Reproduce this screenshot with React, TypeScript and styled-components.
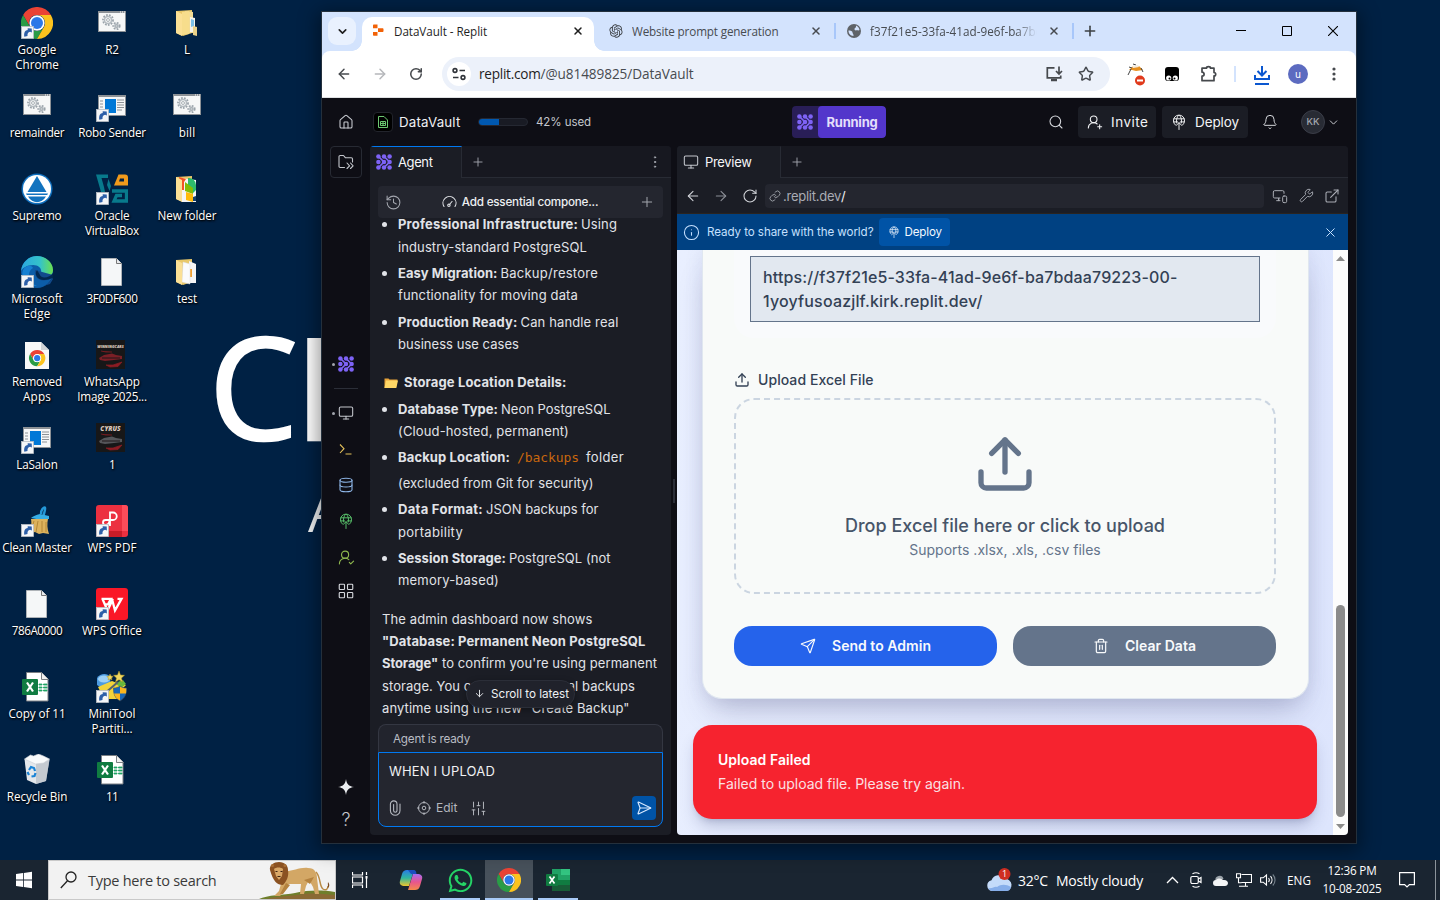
import React, { useLayoutEffect, useRef } from "react";
import styled, { createGlobalStyle, css } from "styled-components";
import {
  ArrowDown, ArrowLeft, ArrowRight, Bell, ChevronDown, Database, ExternalLink, House, Info,
  Link, Monitor, MonitorSmartphone, Plus, RotateCw, Search, Send, SendHorizontal,
  SlidersVertical, Star, Trash2, Upload, UserRoundCheck, UserRoundPlus, Wrench, X, History,
  EllipsisVertical, LayoutGrid,
} from "lucide-react";
import { FaWhatsapp } from "react-icons/fa";
import { RiOpenaiFill } from "react-icons/ri";

const ui = `"Open Sans", "Noto Sans", sans-serif`;
const plex = `Inter, Roboto, "Noto Sans", sans-serif`;
const inter = `Inter, "Liberation Sans", sans-serif`;

const Global = createGlobalStyle`
  * { box-sizing: border-box; }
  body { margin: 0; overflow: hidden; background: #002040; }
  svg { display: block; flex: none; }
`;

/* Text whose tracking is adjusted so that it fills a given measure. */
const Line = styled.span`
  display: inline-block;
  white-space: pre;
`;
function Fit({ w, children }: { w: number; children: string }) {
  const ref = useRef<HTMLSpanElement>(null);
  useLayoutEffect(() => {
    const el = ref.current!;
    el.style.letterSpacing = "0px";
    const natural = el.getBoundingClientRect().width;
    el.style.letterSpacing = `${(w - natural) / children.length}px`;
  }, [w, children]);
  return <Line ref={ref}>{children}</Line>;
}

/* ---------- desktop ---------- */
const Desktop = styled.div`
  width: 1440px;
  height: 900px;
  display: flex;
  flex-direction: column;
  overflow: hidden;
  background: #002144;
  font-family: ${ui};
`;
const Wallpaper = styled.div`
  position: relative;
  height: 860px;
  background: #002144;
`;
const BigLetters = styled.div`
  position: absolute;
  left: 209px;
  top: 288px;
  font: 400 141px/195px ${ui};
  letter-spacing: -3px;
  color: #fff;
  -webkit-text-stroke: 2.5px #fff;
`;
const SmallLetter = styled.div`
  position: absolute;
  left: 308px;
  top: 474px;
  font: 400 54px/74px ${ui};
  color: #f2f4f6;
`;
const Shortcuts = styled.div`
  position: relative;
  display: grid;
  grid-auto-flow: column;
  grid-template-rows: repeat(10, 83px);
  grid-auto-columns: 75px;
  width: 225px;
  margin-left: -1px;
  padding-top: 7px;
`;
const Shortcut = styled.div`
  display: flex;
  flex-direction: column;
  align-items: center;
`;
const ShortcutLabel = styled.div`
  margin: 3px 0 0 1px;
  display: flex;
  flex-direction: column;
  align-items: center;
  font: 400 11.7px/15px ${ui};
  color: #fff;
  text-shadow: 1px 1px 2px #000, 0 1px 2px rgba(0, 0, 0, 0.8);
`;

const ArrowBadge = () => (
  <g>
    <rect x=".5" y="19.500" width="12" height="12" fill="#f4f6f8" stroke="#b9bec4" strokeWidth=".8" />
    <path d="M3.300 29.800c-.6-4.300 1-6.600 3.400-6.800V21.200l4 .2.200 4.200-1.800-.9c-2.200.6-2.800 2-2.600 4.300z" fill="#2d5fa8" />
  </g>
);
const ChromeShapes = () => (
  <>
    <path d="M24 12H44.800A24 24 0 0 0 3.200 12L13.600 30A12 12 0 0 1 24 12Z" fill="#ea4335" />
    <path d="M13.600 30L3.200 12A24 24 0 0 0 24 48L34.400 30A12 12 0 0 1 13.600 30Z" fill="#2a9c46" />
    <path d="M34.400 30L24 48A24 24 0 0 0 44.800 12H24A12 12 0 0 1 34.400 30Z" fill="#fcc31e" />
    <circle cx="24" cy="24" r="11.500" fill="#fff" />
    <circle cx="24" cy="24" r="9" fill="#2b78e8" />
  </>
);
const Svg = ({ children, s = 32, vb = "0 0 32 32" }: { children: React.ReactNode; s?: number; vb?: string }) => (
  <svg width={s} height={s} viewBox={vb}>{children}</svg>
);
const ChromeIcon = () => <Svg><g transform="scale(.6667)"><ChromeShapes /></g><ArrowBadge /></Svg>;
const Cog = ({ x, y, r }: { x: number; y: number; r: number }) => (
  <g fill="none" stroke="#9aa3aa">
    <circle cx={x} cy={y} r={r} strokeWidth="1.800" strokeDasharray="1.700 1.300" />
    <circle cx={x} cy={y} r={r - 1.500} strokeWidth="1.500" stroke="#b4bbc0" />
    <circle cx={x} cy={y} r={r * 0.3} strokeWidth=".8" />
  </g>
);
const BatchIcon = () => (
  <Svg>
    <rect x="2.500" y="4.500" width="27" height="20" fill="#f6f7f7" stroke="#8c9196" />
    <path d="M2 4h28v2H2z" fill="#8c9196" />
    <path d="M24 5h1m1 0h1m1 0h1" stroke="#fff" />
    <Cog x={12} y={13} r={5} /><Cog x={20.500} y={19} r={3.200} />
  </Svg>
);
const FormIcon = () => (
  <Svg>
    <rect x="2.500" y="5.500" width="27" height="20" fill="#f6f7f7" stroke="#8c9196" />
    <path d="M2 5h28v2H2z" fill="#8c9196" />
    <path d="M4 11h3m-3 3h3m-3 3h3m14-7h7m-7 2.500h7m-7 2.500h7m-7 2.500h7m-7 2.500h5" stroke="#8c9196" />
    <rect x="9" y="9" width="11" height="14" fill="#0078d7" />
    <ArrowBadge />
  </Svg>
);
const FolderIcon = ({ kind }: { kind: "docs" | "apps" | "pages" }) => (
  <Svg>
    <path d="M5 4l16-1v23l-9 3-7-3z" fill="#e9c869" />
    {kind === "docs" && <><path d="M14 4l8 1v21h-8z" fill="#f3dc95" /><path d="M19 10l5 1v14h-5z" fill="#f6f4ea" /><path d="M20 12l3 1v6l-3 1z" fill="#7cc1e8" /><path d="M11 5l7-1v23l-7 1z" fill="#f7dd8c" /><path d="M22 19l4 1v9l-4-1z" fill="#ead28a" /></>}
    {kind === "apps" && <><path d="M9 5l16 2v22H11z" fill="#f4f5f6" /><path d="M17 5a7 7 0 0 1 8 7v5l-3 3-5-2z" fill="#2dbb6c" /><path d="M8 4l7 2-2 3v8h-3z" fill="#f35325" /><path d="M14 9l8 6v6l-8-3z" fill="#81bc06" /><path d="M15 19l7 2v8l-7-2z" fill="#ffba08" /><path d="M22 24l3-1v5h-3z" fill="#16416f" /></>}
    {kind === "pages" && <><path d="M18 5l7 3v19l-7 0z" fill="#f4f5f6" /><path d="M18 13h3v8h-3z" fill="#f0a030" /><path d="M12 6l7 2v20l-8-2z" fill="#fbfbfb" stroke="#ddd" strokeWidth=".5" /></>}
    <path d="M5 4l6 3v22l-6-3z" fill="#fbe095" />
  </Svg>
);
const SupremoIcon = () => (
  <Svg><circle cx="16" cy="16" r="15.500" fill="#0f6fbd" /><circle cx="16" cy="16" r="14" fill="#fff" />
    <path d="M16 3l9.500 16h-19zM5 20.500h22l-.8 1.500H5.800zM7 23.500h18c-4.500 7.500-13.500 7.500-18 0z" fill="#1273bf" /></Svg>
);
const VBoxIcon = () => (
  <Svg>
    <path d="M0 1.500h12v3.500H5.500L8 14l1 5H5z" fill="#087a8c" />
    <path d="M12.500 6l2.500 7-1.500 5-2.500-6z" fill="#087a8c" />
    <path d="M18 12.500L22.500 1.500H29a3 3 0 0 1 3 3v8z" fill="#f09a1c" /><path d="M24 5.500h4v3h-5z" fill="#002144" />
    <path d="M16 18h14.500v10H18l2.500-5.500H26" fill="none" stroke="#087a8c" strokeWidth="3.300" />
    <ArrowBadge />
  </Svg>
);
const EdgeIcon = () => (
  <Svg>
    <defs>
      <linearGradient id="eg" x1="0" x2="1"><stop offset="0" stopColor="#2aa7e0" /><stop offset=".6" stopColor="#35c3c9" /><stop offset="1" stopColor="#6be04e" /></linearGradient>
    </defs>
    <circle cx="16" cy="16" r="16" fill="#0c5da8" />
    <path d="M0 15C1 6 8 0 16 0s16 6 16 14c0 5-4 7.500-8 7.500-3.500 0-5-1.500-5-2.500s1.200-1.500 1.200-4c0-3-3-6-8-6C6 9 1.500 12 0 15z" fill="url(#eg)" />
    <path d="M12 12c-6 3-6 14 4 18-10 1-17-8-14-16 2-4 8-6 10-2z" fill="#1780d1" />
    <path d="M14 14c-1 6 3 12 12 10l5-2c-2 4-6 8-12 9l10-3 3-5v-4z" fill="#124a8c" />
    <path d="M16 14c-3 4 0 10 7 10 4 0 6-1 8-2l1 1V17c-3 5-12 6-13 2z" fill="#002144" opacity=".85" />
    <ArrowBadge />
  </Svg>
);
const PaperIcon = () => (
  <Svg><path d="M5.500 2.500h15l5 5v22h-20z" fill="#f5f7f8" stroke="#aeb3b8" /><path d="M20.500 2.500v5h5" fill="#e8eaec" stroke="#777" /></Svg>
);
const ChromeDocIcon = () => (
  <Svg><path d="M4 3h16l8 8v19H4z" fill="#f7f8f8" /><path d="M20 3v8h8z" fill="#cfd3d7" /><g transform="translate(8 11) scale(.34)"><ChromeShapes /></g></Svg>
);
const PosterIcon = ({ title, car }: { title: string; car: string }) => (
  <Svg>
    <path d="M0 1h29v29H0z" fill="#171718" />
    <text x="14.500" y="8.500" textAnchor="middle" fontSize={title.length > 6 ? 3.700 : 6.500} fontWeight="800" fontStyle="italic" fill="#dac9bd" fontFamily="Open Sans, sans-serif">{title}</text>
    <path d="M3 19l5-3 8-1.500 4 1.500 6 1v3l-8 1-9 1-5-1z" fill={car} />
    <path d="M10 26l7 0 9-3-4 4.500-8 .5zM5 12l5 1h6" stroke="#8c1c24" fill="#8c1c24" strokeWidth=".7" />
    <path d="M6 19h18" stroke="#201618" />
  </Svg>
);
const BroomIcon = () => (
  <Svg>
    <path d="M20 9c0-5 3-7 4-6.500S23 8 22.500 11" fill="none" stroke="#2498d8" strokeWidth="2.400" />
    <path d="M10 13c2-2 5-3 9-4l9 2v3l-10 .5z" fill="#36aee6" />
    <path d="M10 14l17 0c-1 4-1 10 1 15l-6-1-4 1-4-2-8 2c4-4 5-10 4-15z" fill="#dcb25c" />
    <path d="M13 16l-3 10m7-10l-2 11m6-11v11m4-10v10" stroke="#a87e30" strokeWidth=".8" />
    <ArrowBadge />
  </Svg>
);
const WpsPdfIcon = () => (
  <Svg><rect width="32" height="32" rx="3" fill="#ec3040" /><path d="M26 0h3a3 3 0 0 1 3 3v23h-6z" fill="#fd4c5a" /><path d="M0 26h26v6H3a3 3 0 0 1-3-3z" fill="#c81c28" />
    <path d="M14 21V7.500h3a3.500 3.500 0 0 1 0 7.500H9.500a2.500 2.500 0 0 0 0 5c2 0 4-1.500 4-5" fill="none" stroke="#fff" strokeWidth="1.800" /><ArrowBadge /></Svg>
);
const WpsIcon = () => (
  <Svg><rect width="32" height="32" rx="3" fill="#fa1727" />
    <path d="M5.500 10.800h9.500l-3 5.500h-3.200M6.500 11l5 11.500L17 11m-1 0l3 11.500L25.500 10.800h-4" fill="none" stroke="#fff" strokeWidth="2.300" /><ArrowBadge /></Svg>
);
const ExcelDoc = () => (
  <Svg>
    <path d="M5.500 1.500h15l6.500 6.500v22H5.500z" fill="#fff" stroke="#7b7f83" /><path d="M20.500 1.500v7h7" fill="#f1f1f1" stroke="#7b7f83" />
    <path d="M18 14h3v-1h-3zm4.500 0H26v-1h-3.500zM18 17h3v-1h-3zm4.500 0H26v-1h-3.500zM18 20h3v-1h-3zm4.500 0H26v-1h-3.500z" fill="#21a366" stroke="#21a366" strokeWidth=".8" />
    <rect x="1" y="8" width="16" height="16" rx="1" fill="#107c41" />
    <path d="M6 11.500l6 9m0-9l-6 9" stroke="#fff" strokeWidth="2.200" />
  </Svg>
);
const MiniToolIcon = () => (
  <Svg>
    <path d="M1 14V7c3-5 11-5 13-1l1 10H4z" fill="#4d9be0" /><ellipse cx="8" cy="8" rx="6" ry="3.500" fill="#9cd0f6" />
    <path d="M2 16l14-6 8 3 6 1-5 5-3 9H12l-8-8z" fill="#f2d33a" /><path d="M19 12l8-3 3 4-5 4z" fill="#68b83c" />
    <path d="M8 23l14-12" stroke="#53606d" strokeWidth="2" /><path d="M23 0l1.500 4 4 .3-3 2.700 1 4-3.500-2.300L19.500 11l1-4-3-2.700 4-.3zM14 3l1 2 2.200.4-1.600 1.500.3 2.100-1.900-1-1.800 1 .2-2-1.500-1.600 2.200-.4z" fill="#f0d860" stroke="#a98f20" strokeWidth=".5" />
    <path d="M24 15c2 1.500 4 2 6.500 2 .2 6-1.500 10-6.500 13-5-3-6.700-7-6.500-13 2.500 0 4.500-.5 6.500-2z" fill="#1767b8" stroke="#484f58" strokeWidth=".6" />
    <path d="M24 15.500v7h6c.3-2 .3-3.500.2-5-2.500 0-4.400-.8-6.200-2zM24 22.500h-6c1 3.500 3 5.500 6 7z" fill="#fbb51c" /><ArrowBadge />
  </Svg>
);
const BinIcon = () => (
  <Svg>
    <path d="M3.500 5l25 0-3.500 22-10 3-9-4z" fill="#e4e8ec" /><path d="M15 9l13.500-3L25 27l-10 3z" fill="#b9c0c8" opacity=".75" />
    <path d="M3.500 5l6-4 3 1 5-2 5 2 6 3-6 4-8 1z" fill="#f8fafb" stroke="#c9cfd5" strokeWidth=".6" />
    <path d="M8 16l2-3 3 1 1 3m.5 2l-1 3-3 .5M8 21l-1.500-3" fill="none" stroke="#1983d6" strokeWidth="2.200" />
  </Svg>
);

type Item = [React.ReactNode, [string, number][]];
const shortcuts: Item[] = [
  [<ChromeIcon />, [["Google", 39], ["Chrome", 43.500]]],
  [<BatchIcon />, [["remainder", 54.500]]],
  [<SupremoIcon />, [["Supremo", 49]]],
  [<EdgeIcon />, [["Microsoft", 51.500], ["Edge", 27]]],
  [<ChromeDocIcon />, [["Removed", 50], ["Apps", 28]]],
  [<FormIcon />, [["LaSalon", 41.500]]],
  [<BroomIcon />, [["Clean Master", 69.500]]],
  [<PaperIcon />, [["786A0000", 50.500]]],
  [<ExcelDoc />, [["Copy of 11", 57]]],
  [<BinIcon />, [["Recycle Bin", 60.500]]],
  [<BatchIcon />, [["R2", 13.500]]],
  [<FormIcon />, [["Robo Sender", 67.500]]],
  [<VBoxIcon />, [["Oracle", 35], ["VirtualBox", 54]]],
  [<PaperIcon />, [["3F0DF600", 51]]],
  [<PosterIcon title="WINNINGCARS" car="#7a1f26" />, [["WhatsApp", 56], ["Image 2025...", 69.500]]],
  [<PosterIcon title="CYRUS" car="#55565a" />, [["1", 6]]],
  [<WpsPdfIcon />, [["WPS PDF", 49]]],
  [<WpsIcon />, [["WPS Office", 60]]],
  [<MiniToolIcon />, [["MiniTool", 47], ["Partiti...", 41]]],
  [<ExcelDoc />, [["11", 12]]],
  [<FolderIcon kind="docs" />, [["L", 6]]],
  [<BatchIcon />, [["bill", 16.500]]],
  [<FolderIcon kind="apps" />, [["New folder", 59]]],
  [<FolderIcon kind="pages" />, [["test", 20]]],
];

/* ---------- browser window ---------- */
const BrowserWindow = styled.div`
  position: absolute;
  left: 322px;
  top: 12px;
  width: 1034px;
  height: 831px;
  display: flex;
  flex-direction: column;
  background: #0e0e15;
  box-shadow: 0 0 0 1px #24303c, 0 4px 18px 4px rgba(0, 0, 0, 0.42);
`;
const TabStrip = styled.div`
  height: 39px;
  display: flex;
  align-items: flex-start;
  padding: 5px 0 0 6px;
  background: #d3e3fd;
  color: #3c4043;
`;
const TabSearch = styled.div`
  width: 28px;
  height: 28px;
  margin-right: 6px;
  display: grid;
  place-items: center;
  border-radius: 9px;
  background: #e9f1fe;
  color: #1f1f1f;
`;
const BrowserTab = styled.div<{ $width: number; $active?: boolean; $lead: number }>`
  width: ${(p) => p.$width}px;
  height: ${(p) => (p.$active ? 34 : 28)}px;
  display: flex;
  align-items: center;
  gap: 8px;
  padding: 0 ${(p) => (p.$active ? 10 : 12)}px ${(p) => (p.$active ? 6 : 0)}px ${(p) => p.$lead}px;
  font: 400 11.7px/16px ${ui};
  color: #474b50;
  ${(p) => p.$active && css`
    position: relative;
    background: #fff;
    color: #1f1f1f;
    border-radius: 10px 10px 0 0;
    &::before, &::after {
      content: "";
      position: absolute;
      bottom: 0;
      width: 10px;
      height: 10px;
    }
    &::before { left: -10px; background: radial-gradient(circle at 0 0, transparent 9.5px, #fff 10px); }
    &::after { right: -10px; background: radial-gradient(circle at 100% 0, transparent 9.5px, #fff 10px); }
  `}
`;
const TabTitle = styled.div<{ $fade?: boolean }>`
  flex: 1;
  min-width: 0;
  overflow: hidden;
  ${(p) => p.$fade && css`mask-image: linear-gradient(90deg, #000 145px, transparent 167px);`}
`;
const TabRule = styled.div`
  width: 2px;
  height: 16px;
  margin-top: 6px;
  background: #a8c7fa;
`;
const NewTab = styled.div`
  margin: 6px 0 0 8px;
`;
const WindowControls = styled.div`
  display: flex;
  margin: -5px 0 0 auto;
`;
const WindowControl = styled.div`
  width: 46px;
  height: 38px;
  display: grid;
  place-items: center;
  color: #000;
`;
const AddressRow = styled.div`
  height: 47px;
  display: flex;
  align-items: center;
  padding-left: 4px;
  background: #fff;
  border-radius: 8px 8px 0 0;
  border-bottom: 1px solid #dfe1e3;
  color: #46494d;
`;
const AddressBack = styled.div`
  background: linear-gradient(#d3e3fd 50%, #fff 50%);
`;
const Slot = styled.div<{ $w?: number; $color?: string }>`
  width: ${(p) => p.$w ?? 36}px;
  display: grid;
  place-items: center;
  flex: none;
  color: ${(p) => p.$color ?? "inherit"};
`;
const Omnibox = styled.div`
  width: 668px;
  height: 34px;
  margin: 0 8px;
  padding: 0 8px 0 5px;
  display: flex;
  align-items: center;
  border-radius: 17px;
  background: #ecf1fa;
  font: 400 13.6px/20px ${ui};
  color: #474b50;
  b { font-weight: 400; color: #1f1f1f; }
`;
const SiteChip = styled.div`
  width: 24px;
  height: 24px;
  margin-right: 8px;
  display: grid;
  place-items: center;
  border-radius: 50%;
  background: #fff;
  color: #30343a;
`;
const OmniActions = styled.div`
  display: flex;
  margin-left: auto;
`;
const ToolbarRule = styled.div`
  width: 2px;
  height: 16px;
  margin: 0 8px;
  background: #d3e3fd;
`;
const ProfileDot = styled.div`
  width: 20px;
  height: 20px;
  border-radius: 50%;
  display: grid;
  place-items: center;
  background: #5c6bc0;
  color: #fff;
  font: 400 10px/20px ${inter};
`;

/* ---------- workspace ---------- */
const Workspace = styled.div`
  flex: 1;
  min-height: 0;
  display: flex;
  flex-direction: column;
  font-family: ${plex};
  color: #f0f1f3;
`;
const Header = styled.div`
  height: 48px;
  display: flex;
  align-items: center;
`;
const HeaderLeft = styled.div`
  width: 470px;
  display: flex;
  align-items: center;
  padding-left: 8px;
`;
const ProjectIcon = styled.div`
  width: 20px;
  height: 20px;
  margin: 0 6px 0 11px;
  display: grid;
  place-items: center;
  border-radius: 4px;
  background: #000;
  border: 1px solid #22242c;
`;
const ProjectName = styled.div`
  width: 79px;
  font-size: 13.300px;
`;
const Meter = styled.div`
  width: 50px;
  height: 8px;
  margin-right: 8px;
  overflow: hidden;
  border-radius: 4px;
  background: #191b24;
  border: 1px solid #252832;
  &::before {
    content: "";
    display: block;
    width: 42%;
    height: 100%;
    background: #0058b0;
  }
`;
const Usage = styled.div`
  font-size: 11.500px;
  color: #c4c7cd;
`;
const RunPill = styled.div`
  width: 94px;
  height: 32px;
  display: flex;
  align-items: center;
  overflow: hidden;
  border-radius: 4px;
  background: #291e57;
`;
const RunLabel = styled.div`
  width: 68px;
  height: 32px;
  display: grid;
  place-items: center;
  border-radius: 4px;
  background: #5336cb;
  font: 700 13px/32px ${plex};
  color: #e4dffb;
`;
const HeaderRight = styled.div`
  display: flex;
  align-items: center;
  gap: 6px;
  margin-left: auto;
  padding-right: 18px;
  color: #d6d8dd;
`;
const HeaderButton = styled.div<{ $w: number }>`
  width: ${(p) => p.$w}px;
  height: 32px;
  display: flex;
  align-items: center;
  gap: 8px;
  padding-left: 9px;
  border-radius: 4px;
  background: #1b1d25;
  font-size: 13.500px;
  color: #f3f4f6;
`;
const UserDot = styled.div`
  width: 24px;
  height: 24px;
  margin-left: 9px;
  display: grid;
  place-items: center;
  border-radius: 50%;
  border: 1px solid #3a3d48;
  background: #282b34;
  font: 500 9.500px/22px ${plex};
  color: #a5a8b0;
`;
const UserChevron = styled.div`
  margin-right: -2px;
  margin-left: -4px;
`;
const Body = styled.div`
  flex: 1;
  min-height: 0;
  display: flex;
  padding: 0 8px 8px 0;
`;
const Rail = styled.div`
  width: 48px;
  display: flex;
  flex-direction: column;
  align-items: center;
`;
const RailButton = styled.div<{ $color?: string; $mt?: string; $dot?: boolean; $boxed?: boolean }>`
  width: 32px;
  height: 32px;
  flex: none;
  margin-top: ${(p) => p.$mt ?? "4px"};
  display: grid;
  place-items: center;
  color: ${(p) => p.$color ?? "#c3c6cc"};
  ${(p) => p.$boxed && css`border: 1px solid #272a33; border-radius: 4px;`}
  ${(p) => p.$dot && css`
    position: relative;
    &::before {
      content: "";
      position: absolute;
      left: 2px;
      top: 15px;
      width: 3px;
      height: 3px;
      border-radius: 50%;
      background: #a2a5ad;
    }
  `}
`;
const RailRule = styled.div`
  width: 24px;
  height: 1px;
  margin: 8px 0 4px;
  background: #2b2e38;
`;
const HelpMark = styled.span`
  font: 300 18px/34px ${plex};
`;
const Pane = styled.div<{ $w: number }>`
  width: ${(p) => p.$w}px;
  position: relative;
  display: flex;
  flex-direction: column;
  overflow: hidden;
  border-radius: 4px;
  background: #1b1d25;
`;
const PaneTabs = styled.div`
  height: 32px;
  flex: none;
  display: flex;
  background: #171820;
`;
const PaneTab = styled.div<{ $w: number; $focus?: boolean }>`
  width: ${(p) => p.$w}px;
  display: flex;
  align-items: center;
  gap: 6px;
  padding-left: 6px;
  padding-bottom: 1px;
  background: #1b1d25;
  border-right: 1px solid #282b34;
  border-top: 1px solid ${(p) => (p.$focus ? "#0079f2" : "#1b1d25")};
  font: 400 13px/16px ${plex};
  color: #f5f6f8;
  > span { margin-top: -1px; }
`;
const PaneTabRest = styled.div`
  flex: 1;
  display: flex;
  align-items: center;
  padding: 0 8px 0 9px;
  border-bottom: 1px solid #282b34;
  color: #a9acb4;
  > :nth-child(2) { margin-left: auto; }
`;
const Splitter = styled.div`
  width: 6px;
  display: grid;
  place-items: center;
  &::before {
    content: "";
    width: 2px;
    height: 24px;
    background: #2b2e38;
  }
`;

/* agent chat */
const Chat = styled.div`
  flex: 1;
  min-height: 0;
  padding: 8px 8px 0;
`;
const ChatHead = styled.div`
  position: relative;
  z-index: 1;
  height: 32px;
  display: flex;
  align-items: center;
  padding: 0 8px 0 7px;
  border-radius: 4px;
  background: #24262f;
  color: #a3a6ae;
`;
const ChatTitle = styled.div`
  flex: 1;
  display: flex;
  justify-content: center;
  align-items: center;
  gap: 5px;
  margin-left: -1px;
  font-size: 11.700px;
  font-weight: 500;
  color: #eceef1;
`;
const Prose = styled.div`
  margin-top: -4.900px;
  padding-left: 4px;
  font: 400 13px/22.400px ${plex};
  color: #e1e3e8;
  b { font-weight: 650; }
`;
const Bullets = styled.ul`
  margin: 0 0 16px;
  padding: 0 0 0 16px;
  list-style: none;
  display: flex;
  flex-direction: column;
  gap: 4px;
`;
const Bullet = styled.li`
  position: relative;
  &::before {
    content: "";
    position: absolute;
    left: -16px;
    top: 9px;
    width: 5px;
    height: 5px;
    border-radius: 50%;
    background: #e1e3e8;
  }
`;
const Row = styled.div<{ $pull?: number }>`
  height: 22.400px;
  display: flex;
  gap: ${(p) => p.$pull ?? 3}px;
  white-space: nowrap;
`;
const CodeRow = styled(Row)`
  height: 25.300px;
`;
const Code = styled.code`
  margin: 0 3px;
  font: 400 13px/24px "DejaVu Sans Mono", monospace;
  color: #c8670e;
`;
const Heading = styled.div`
  height: 22.400px;
  margin-bottom: 3.800px;
  display: flex;
  align-items: center;
  gap: 6px;
  padding-left: 2px;
`;
const JumpPill = styled.div`
  position: absolute;
  left: 96px;
  top: 534px;
  width: 109px;
  height: 28px;
  display: flex;
  align-items: center;
  gap: 6px;
  padding: 0 0 1px 7px;
  border-radius: 14px;
  border: 1px solid #2b2e38;
  background: #20222b;
  box-shadow: 0 2px 6px rgba(0, 0, 0, 0.35);
  font-size: 11.700px;
  color: #eef0f3;
`;
const Composer = styled.div`
  position: relative;
  margin: 0 8px 8px;
`;
const Status = styled.div`
  height: 28px;
  padding: 0 14px;
  border: 1px solid #343742;
  border-bottom: 0;
  border-radius: 8px 8px 0 0;
  background: #22242d;
  font: 400 11.700px/28px ${plex};
  color: #b9bcc3;
`;
const Prompt = styled.div`
  height: 75px;
  display: flex;
  flex-direction: column;
  justify-content: space-between;
  padding: 9px 6px 6px 10px;
  border: 1px solid #0079f2;
  border-radius: 0 0 8px 8px;
  background: #24262f;
  font: 400 13px/18px ${plex};
  > span { align-self: flex-start; }
`;
const PromptTools = styled.div`
  display: flex;
  align-items: center;
  font-size: 12px;
  color: #b4b7be;
`;
const Edit = styled.div`
  display: flex;
  align-items: center;
  gap: 5px;
  margin: 0 12px 0 16px;
`;
const SendButton = styled.div`
  width: 24px;
  height: 24px;
  margin-left: auto;
  display: grid;
  place-items: center;
  border-radius: 4px;
  background: #0053a6;
  color: #d7e9ff;
`;

/* preview */
const NavRow = styled.div`
  height: 36px;
  flex: none;
  display: flex;
  align-items: center;
  padding-left: 2px;
  border-bottom: 1px solid #2a2420;
  color: #d0d2d7;
`;
const PathField = styled.div`
  width: 499px;
  height: 24px;
  margin: 0 3px 0 1px;
  padding-left: 4px;
  display: flex;
  align-items: center;
  gap: 2px;
  border-radius: 4px;
  background: #24262f;
  font-size: 13px;
  color: #a9acb4;
  b { font-weight: 400; color: #f0f1f3; }
`;
const PathText = styled.div`
  display: flex;
`;
const Banner = styled.div`
  height: 36px;
  flex: none;
  display: flex;
  align-items: center;
  gap: 6px;
  padding: 0 10px 0 6px;
  background: #004182;
  font-size: 11.600px;
  color: #c5e0ff;
`;
const BannerText = styled.div`
  margin-left: 1px;
`;
const BannerButton = styled.div`
  width: 71px;
  height: 28px;
  margin-left: -1px;
  margin-right: auto;
  display: flex;
  align-items: center;
  gap: 5px;
  padding-left: 9px;
  border-radius: 4px;
  background: #0053a6;
  color: #f2f8ff;
`;
const Viewport = styled.div`
  flex: 1;
  min-height: 0;
  display: flex;
  font-family: ${inter};
`;
const Canvas = styled.div`
  width: 656px;
  position: relative;
  overflow: hidden;
  padding: 0 24.500px;
  background: linear-gradient(100deg, #e9efff, #dde5fd);
`;
const Card = styled.div`
  height: 449px;
  padding: 0 31.500px;
  border: 1px solid #e0e7f0;
  border-top: 0;
  border-radius: 0 0 20px 20px;
  background: #f8faf9;
  box-shadow: 0 18px 30px -8px rgba(60, 60, 110, 0.28), 0 0 18px rgba(90, 100, 150, 0.12);
`;
const LinkPanel = styled.div`
  height: 88px;
  padding: 6px 16px 16px;
  border-radius: 0 0 20px 20px;
  background: #f9fafc;
`;
const LinkBox = styled.div`
  height: 66px;
  padding: 8px 12px;
  border: 1px solid #64748b;
  background: #e2e8f0;
  font: 550 16px/24px ${inter};
  color: #334155;
`;
const FieldLabel = styled.div`
  height: 20px;
  margin: 32px 0 8px;
  display: flex;
  align-items: center;
  gap: 8px;
  font: 500 14px/20px ${inter};
  color: #334155;
`;
const DropZone = styled.div`
  height: 196px;
  display: flex;
  flex-direction: column;
  align-items: center;
  padding-top: 32px;
  border: 2px dashed #cbd5e1;
  border-radius: 20px;
  color: #64748b;
`;
const DropTitle = styled.div`
  margin-top: 16px;
  font: 500 18px/28px ${inter};
  color: #475569;
`;
const DropHint = styled.div`
  font: 400 14px/20px ${inter};
`;
const Actions = styled.div`
  display: grid;
  grid-template-columns: 1fr 1fr;
  gap: 16px;
  margin-top: 32px;
`;
const Action = styled.div<{ $bg: string }>`
  height: 40px;
  display: flex;
  align-items: center;
  justify-content: center;
  gap: 16px;
  border-radius: 18px;
  background: ${(p) => p.$bg};
  font: 600 14px/20px ${inter};
  color: #f8fafc;
`;
const Toast = styled.div`
  position: absolute;
  left: 16px;
  top: 475px;
  width: 624px;
  height: 94px;
  padding: 25px;
  border-radius: 19px;
  background: #f6232f;
  box-shadow: 0 10px 15px -3px rgba(50, 60, 110, 0.25), 0 4px 6px -4px rgba(50, 60, 110, 0.25);
  font: 400 14px/24px ${inter};
  color: #fbe0e3;
  b { font-weight: 600; color: #fff; }
`;
const ToastLine = styled.div`
  height: 24px;
  margin-top: -2px;
  & + & { margin-top: 0; }
`;
const Scrollbar = styled.div`
  width: 15px;
  display: flex;
  flex-direction: column;
  justify-content: space-between;
  align-items: center;
  padding: 6px 0;
  background: #fcfcfc;
`;
const Thumb = styled.div`
  width: 9px;
  height: 212px;
  margin: auto 0 7px;
  border-radius: 5px;
  background: #8b8b8b;
`;

const DotGrid = ({ s = 16 }: { s?: number }) => (
  <svg width={s} height={s} viewBox="0 0 16 16" fill="#7e63f6">
    {[2.400, 8, 13.600].map((y) => [2.400, 8, 13.600].map((x) => <circle key={`${x}-${y}`} cx={x} cy={y} r={2.250} />))}
    <path d="M2.400 2.400L8 8l-5.600 5.600M8 2.400L13.600 8 8 13.600" fill="none" stroke="#7e63f6" strokeWidth="1.600" />
  </svg>
);
const DeployGlyph = ({ s }: { s: number }) => (
  <svg width={s} height={s} viewBox="0 0 16 16" fill="none" stroke="currentColor" strokeWidth=".95" strokeLinecap="round" strokeLinejoin="round">
    <path d="M4.300 10.900A5.600 5.600 0 1 1 11.700 10.900M2.900 4.800h10.200M2.700 7.900h3.800M9.500 7.900h3.800M5.700 9C5 6.200 5.700 2.700 8 1.100c2.300 1.600 3 5.100 2.300 7.900M8 15.500V8.700m-2.800 2.800L8 8.700l2.800 2.800" />
  </svg>
);
const Clip = () => (
  <svg width="12" height="16" viewBox="0 0 12 16" fill="none" stroke="currentColor" strokeWidth="1.100" strokeLinecap="round"><path d="M11 4v6.500a4.800 4.800 0 0 1-9.600 0V4.200a3.300 3.300 0 0 1 6.600 0v6.300a1.700 1.700 0 0 1-3.400 0V4.500" /></svg>
);
const Sheet = () => (
  <svg width="10" height="12" viewBox="0 0 10 12" fill="none" stroke="#6cc872"><path d="M.5.5h5.500l3.500 3.500v7.500h-9zM2.500 5.500h5v4h-5zM2.500 7.500h5M5 5.500v4" /></svg>
);
const Target = () => (
  <svg width="14" height="14" viewBox="0 0 14 14" fill="none" stroke="currentColor"><circle cx="7" cy="7" r="5.500" /><circle cx="7" cy="7" r="1.800" /><path d="M7 0v2.500M7 11.500V14M0 7h2.500M11.500 7H14" /></svg>
);
const Gauge = () => (
  <svg width="15" height="12" viewBox="0 0 15 12" fill="none" stroke="#dfe1e5" strokeWidth="1.100" strokeLinecap="round"><path d="M2 10.500A6.500 6.500 0 1 1 13 10.500M7.500 8.500L10 5.500" /><circle cx="6.900" cy="9.300" r="1.200" /></svg>
);
const FolderChevrons = () => (
  <svg width="16" height="16" viewBox="0 0 16 16" fill="none" stroke="currentColor" strokeWidth="1.100" strokeLinejoin="round" strokeLinecap="round"><path d="M6.500 13.500H2.200c-.7 0-1.200-.5-1.200-1.200V2.700c0-.7.5-1.200 1.200-1.200h3.300l1.800 2.200h6c.7 0 1.200.5 1.200 1.200v3M9 9l2.600 2.800L9 14.500M12.500 9l2.600 2.800-2.600 2.700" /></svg>
);
const Sparkle = () => (
  <svg width="16" height="16" viewBox="0 0 16 16" fill="#eceef1"><path d="M8 0c.7 5 2.500 7.200 8 8-5.500.8-7.300 3-8 8-.7-5-2.500-7.200-8-8 5.500-.8 7.300-3 8-8z" /></svg>
);

function BrowserChrome() {
  return (
    <>
      <TabStrip>
        <TabSearch><ChevronDown size={13} strokeWidth={3} /></TabSearch>
        <BrowserTab $width={232} $active $lead={8}>
          <svg width="16" height="16" viewBox="0 0 16 16" fill="#f26207"><path d="M3 2.500c0-.5.300-1 1-1h3.500v3.700H3zM8 5.200h4.500c.5 0 1 .3 1 1v1.700c0 .6-.5 1-1 1H8zM3 8.900h4.500v3.800H4c-.6 0-1-.4-1-1z" /></svg>
          <TabTitle><Fit w={93}>DataVault - Replit</Fit></TabTitle>
          <X size={12} strokeWidth={3} />
        </BrowserTab>
        <BrowserTab $width={240} $lead={14}>
          <RiOpenaiFill size={16} color="#3b3f44" />
          <TabTitle><Fit w={146.500}>Website prompt generation</Fit></TabTitle>
          <X size={12} strokeWidth={3} />
        </BrowserTab>
        <TabRule />
        <BrowserTab $width={236} $lead={10}>
          <svg width="16" height="16" viewBox="0 0 16 16"><circle cx="8" cy="8" r="7" fill="#5f6368" /><path d="M2.500 7.500c2 0 4 .5 4 2s1.300 1.300 1 3.500C4.500 12.800 2.300 10.500 2.500 7.500zM10 2.600c1.800.7 3.200 2.300 3.500 4.400-.8 1-2-.2-3 .3s-2.200-.3-2-1.300 1.800-.6 1.500-3.400z" fill="#d3e3fd" /></svg>
          <TabTitle $fade><Fit w={186}>f37f21e5-33fa-41ad-9e6f-ba7bdaa</Fit></TabTitle>
          <X size={12} strokeWidth={3} />
        </BrowserTab>
        <TabRule />
        <NewTab><Plus size={16} strokeWidth={2.400} /></NewTab>
        <WindowControls>
          <WindowControl><svg width="10" height="10"><path d="M0 4.500h10" stroke="#000" /></svg></WindowControl>
          <WindowControl><svg width="10" height="10"><path d="M.5.500h9v9h-9z" fill="none" stroke="#000" /></svg></WindowControl>
          <WindowControl><svg width="10" height="10"><path d="M0 0l10 10m0-10l-10 10" stroke="#000" strokeWidth="1.100" /></svg></WindowControl>
        </WindowControls>
      </TabStrip>
      <AddressBack>
        <AddressRow>
          <Slot><ArrowLeft size={16} strokeWidth={2.200} /></Slot>
          <Slot $color="#b5b7ba"><ArrowRight size={16} strokeWidth={2.200} /></Slot>
          <Slot><RotateCw size={14} strokeWidth={2.600} /></Slot>
          <Omnibox>
            <SiteChip>
              <svg width="14" height="14" viewBox="0 0 14 14" fill="none" stroke="currentColor" strokeWidth="1.600"><circle cx="3" cy="3.500" r="1.900" /><path d="M7.500 3.500H13M1 10.500h5.500" /><circle cx="11" cy="10.500" r="1.900" /></svg>
            </SiteChip>
            <b><Fit w={61.500}>replit.com</Fit></b><Fit w={153}>/@u81489825/DataVault</Fit>
            <OmniActions>
              <Slot $w={32}>
                <svg width="18" height="16" viewBox="0 0 18 16" fill="none" stroke="#46494d" strokeWidth="1.700"><path d="M9.500 1.800H2.300v10h13.400V9.500" /><path d="M6 14h6" strokeWidth="2.500" /><path d="M14 .5v7M11 5l3 3 3-3" /></svg>
              </Slot>
              <Slot $w={32}><Star size={16} strokeWidth={2.200} /></Slot>
            </OmniActions>
          </Omnibox>
          <Slot>
            <svg width="20" height="24" viewBox="0 0 20 24"><path d="M3 8l4-4 6 0 4 4-7 1-4-1z" fill="#e8901f" /><path d="M2 13l3-6m-2-2l3 1m9 0l2 4M7 2l3 1" stroke="#444" /><path d="M6 4l6-1 1 2-6 1z" fill="#f5ede0" /><circle cx="14" cy="18.500" r="5" fill="#e03a1c" /><path d="M11 17.500h6v2h-6z" fill="#fff" /></svg>
          </Slot>
          <Slot>
            <svg width="16" height="16" viewBox="0 0 16 16"><rect x="1" y="1" width="14" height="14" rx="3" fill="#000" /><circle cx="4.700" cy="12" r="2.600" fill="#fff" /><circle cx="11.300" cy="12" r="2.600" fill="#fff" /><circle cx="5.500" cy="12.500" r="1" /><circle cx="10.500" cy="12.500" r="1" /></svg>
          </Slot>
          <Slot>
            <svg width="18" height="18" viewBox="0 0 18 18" fill="none" stroke="#46494d" strokeWidth="1.700" strokeLinejoin="round"><path d="M3 3.200h4.500a2 1.500 0 0 1 4 0H15v4.300a1.700 1.700 0 0 1 0 3.400v4.800H3v-4.500c2.800-.2 2.800-3.700 0-4z" /></svg>
          </Slot>
          <ToolbarRule />
          <Slot>
            <svg width="18" height="22" viewBox="0 0 18 22" fill="none" stroke="#0b57d0" strokeWidth="2"><path d="M9 3v9M4.500 8L9 12.500 13.500 8M2 12v4h14v-4M2 21h14" /></svg>
          </Slot>
          <Slot><ProfileDot>u</ProfileDot></Slot>
          <Slot><svg width="4" height="14" fill="#46494d"><circle cx="2" cy="2" r="1.600" /><circle cx="2" cy="7" r="1.600" /><circle cx="2" cy="12" r="1.600" /></svg></Slot>
        </AddressRow>
      </AddressBack>
    </>
  );
}

function AgentPane() {
  return (
    <Pane $w={301}>
      <PaneTabs>
        <PaneTab $w={92} $focus><DotGrid /><Fit w={34.500}>Agent</Fit></PaneTab>
        <PaneTabRest><Plus size={14} strokeWidth={1.500} /><EllipsisVertical size={16} strokeWidth={1.500} /></PaneTabRest>
      </PaneTabs>
      <Chat>
        <ChatHead>
          <History size={17} strokeWidth={1.500} />
          <ChatTitle><Gauge /><Fit w={136.500}>Add essential compone...</Fit></ChatTitle>
          <Plus size={16} strokeWidth={1.500} />
        </ChatHead>
        <Prose>
          <Bullets>
            <Bullet>
              <Row><b><Fit w={180}>Professional Infrastructure:</Fit></b><Fit w={36}>Using</Fit></Row>
              <Row><Fit w={189}>industry-standard PostgreSQL</Fit></Row>
            </Bullet>
            <Bullet>
              <Row><b><Fit w={99.500}>Easy Migration:</Fit></b><Fit w={97.500}>Backup/restore</Fit></Row>
              <Row><Fit w={180}>functionality for moving data</Fit></Row>
            </Bullet>
            <Bullet>
              <Row><b><Fit w={119.500}>Production Ready:</Fit></b><Fit w={98}>Can handle real</Fit></Row>
              <Row><Fit w={121}>business use cases</Fit></Row>
            </Bullet>
          </Bullets>
          <Heading>
            <svg width="14" height="12" viewBox="0 0 14 12"><path d="M.5 1.500h4l1 1h8L12 11H.5z" fill="#e8a33a" /><path d="M2 3.500h12L12.300 11H.5z" fill="#ffd766" /></svg>
            <b><Fit w={162.500}>Storage Location Details:</Fit></b>
          </Heading>
          <Bullets>
            <Bullet>
              <Row><b><Fit w={100}>Database Type:</Fit></b><Fit w={109.500}>Neon PostgreSQL</Fit></Row>
              <Row><Fit w={171}>(Cloud-hosted, permanent)</Fit></Row>
            </Bullet>
            <Bullet>
              <CodeRow $pull={4}><b><Fit w={112}>Backup Location:</Fit></b><Code><Fit w={62}>/backups</Fit></Code><Fit w={38}>folder</Fit></CodeRow>
              <Row><Fit w={195.500}>(excluded from Git for security)</Fit></Row>
            </Bullet>
            <Bullet>
              <Row><b><Fit w={85}>Data Format:</Fit></b><Fit w={112.500}>JSON backups for</Fit></Row>
              <Row><Fit w={65}>portability</Fit></Row>
            </Bullet>
            <Bullet>
              <Row><b><Fit w={108}>Session Storage:</Fit></b><Fit w={101.500}>PostgreSQL (not</Fit></Row>
              <Row><Fit w={101}>memory-based)</Fit></Row>
            </Bullet>
          </Bullets>
          <Row><Fit w={210.500}>The admin dashboard now shows</Fit></Row>
          <Row><b><Fit w={263.500}>"Database: Permanent Neon PostgreSQL</Fit></b></Row>
          <Row $pull={4}><b><Fit w={56}>Storage"</Fit></b><Fit w={215}>to confirm you're using permanent</Fit></Row>
          <Row><Fit w={253}>storage. You can create manual backups</Fit></Row>
          <Row><Fit w={247.500}>anytime using the new "Create Backup"</Fit></Row>
        </Prose>
      </Chat>
      <JumpPill><ArrowDown size={11} strokeWidth={2} /><Fit w={78}>Scroll to latest</Fit></JumpPill>
      <Composer>
        <Status><Fit w={77}>Agent is ready</Fit></Status>
        <Prompt>
          <Fit w={106}>WHEN I UPLOAD</Fit>
          <PromptTools>
            <Clip />
            <Edit><Target /><Fit w={21.500}>Edit</Fit></Edit>
            <SlidersVertical size={17} strokeWidth={1.400} />
            <SendButton><SendHorizontal size={16} strokeWidth={1.700} /></SendButton>
          </PromptTools>
        </Prompt>
      </Composer>
    </Pane>
  );
}

function PreviewPane() {
  return (
    <Pane $w={671}>
      <PaneTabs>
        <PaneTab $w={104}><Monitor size={16} strokeWidth={1.600} color="#c3c6cc" /><Fit w={46.500}>Preview</Fit></PaneTab>
        <PaneTabRest><Plus size={14} strokeWidth={1.500} /></PaneTabRest>
      </PaneTabs>
      <NavRow>
        <Slot $w={28}><ArrowLeft size={16} strokeWidth={1.600} /></Slot>
        <Slot $w={28} $color="#8c8f97"><ArrowRight size={16} strokeWidth={1.600} /></Slot>
        <Slot $w={29}><RotateCw size={16} strokeWidth={1.600} /></Slot>
        <PathField><Link size={12} strokeWidth={1.700} /><PathText><Fit w={58}>.replit.dev</Fit><b>/</b></PathText></PathField>
        <Slot $w={26} $color="#a9acb4"><MonitorSmartphone size={16} strokeWidth={1.500} /></Slot>
        <Slot $w={26} $color="#a9acb4"><Wrench size={15} strokeWidth={1.500} /></Slot>
        <Slot $w={26} $color="#a9acb4"><ExternalLink size={16} strokeWidth={1.600} /></Slot>
      </NavRow>
      <Banner>
        <Info size={17} strokeWidth={1.500} />
        <BannerText><Fit w={166.500}>Ready to share with the world?</Fit></BannerText>
        <BannerButton><DeployGlyph s={12} /><Fit w={37.500}>Deploy</Fit></BannerButton>
        <X size={15} strokeWidth={1.600} />
      </Banner>
      <Viewport>
        <Canvas>
          <Card>
            <LinkPanel>
              <LinkBox>
                <Fit w={414.500}>https://f37f21e5-33fa-41ad-9e6f-ba7bdaa79223-00-</Fit>
                <Fit w={219.500}>1yoyfusoazjlf.kirk.replit.dev/</Fit>
              </LinkBox>
            </LinkPanel>
            <FieldLabel><Upload size={16} /><Fit w={115.500}>Upload Excel File</Fit></FieldLabel>
            <DropZone>
              <Upload size={64} />
              <DropTitle><Fit w={320}>Drop Excel file here or click to upload</Fit></DropTitle>
              <DropHint><Fit w={191.500}>Supports .xlsx, .xls, .csv files</Fit></DropHint>
            </DropZone>
            <Actions>
              <Action $bg="#2563eb"><Send size={16} strokeWidth={1.700} /><Fit w={99}>Send to Admin</Fit></Action>
              <Action $bg="#64748b"><Trash2 size={16} strokeWidth={1.800} /><Fit w={71}>Clear Data</Fit></Action>
            </Actions>
          </Card>
          <Toast>
            <ToastLine><b><Fit w={92.500}>Upload Failed</Fit></b></ToastLine>
            <ToastLine><Fit w={247}>Failed to upload file. Please try again.</Fit></ToastLine>
          </Toast>
        </Canvas>
        <Scrollbar>
          <svg width="9" height="5"><path d="M0 5l4.500-5L9 5z" fill="#8b8b8b" /></svg>
          <Thumb />
          <svg width="9" height="5"><path d="M0 0h9L4.500 5z" fill="#8b8b8b" /></svg>
        </Scrollbar>
      </Viewport>
    </Pane>
  );
}

/* ---------- taskbar ---------- */
const Taskbar = styled.div`
  height: 40px;
  display: flex;
  background: #1a2531;
  color: #fff;
  font-family: ${ui};
`;
const SearchBox = styled.div`
  width: 288px;
  display: flex;
  align-items: center;
  padding-left: 11px;
  border: 1px solid #c9c9c9;
  background: #f2f2f2;
  font-size: 14.500px;
  color: #3a3a3a;
  > span { margin-left: 11px; }
  > :last-child { margin-left: auto; }
`;
const TaskItem = styled.div<{ $w: number; $line?: number; $active?: boolean }>`
  width: ${(p) => p.$w}px;
  height: 40px;
  display: grid;
  place-items: center;
  background-color: ${(p) => (p.$active ? "#47515b" : "transparent")};
  ${(p) => p.$line && css`
    background-image: linear-gradient(#a9cbf8, #a9cbf8);
    background-repeat: no-repeat;
    background-size: ${p.$line}px 2px;
    background-position: center bottom;
  `}
`;
const Tray = styled.div`
  margin-left: auto;
  display: flex;
  align-items: center;
  font-size: 14px;
`;
const Weather = styled.div`
  display: flex;
  align-items: center;
  margin-right: 17px;
  > :nth-child(2) { margin: 0 8px 0 6px; }
`;
const TraySmall = styled.div`
  width: 24px;
  margin: 0 11px 0 7px;
  font-size: 11.700px;
`;
const Clock = styled.div`
  width: 60px;
  display: flex;
  flex-direction: column;
  align-items: center;
  padding-bottom: 2px;
  font: 400 11.700px/18px ${ui};
`;
const ShowDesktop = styled.div`
  width: 5px;
  height: 40px;
  margin-left: 3px;
  border-left: 1px solid #8c949b;
`;
const Lion = () => (
  <svg width="76" height="38" viewBox="0 0 76 38">
    <path d="M0 38c8-4 25-4 36-6 14-3 26-3 40-1v7z" fill="#6f7f2c" />
    <path d="M8 38c8-3 26-3 36-5 10-1 20 0 32 1v4z" fill="#8a6a34" />
    <path d="M57 11c5 5 3 14 7 17 3 2 5 0 5-3" fill="none" stroke="#b98b45" strokeWidth="1.500" />
    <path d="M68.500 27c1-2 0-4 .5-6 1.500 2 2 4 0 6z" fill="#7a4a20" />
    <path d="M25 10c8 1 15-4 24-3 7 0 9 5 9 10l1 8 1 8h-4l-2-7-4-7-3 6-2 8h-4l1-10-13 0-4 8-4 4h-6l5-5 3-11z" fill="#d3a765" />
    <path d="M27 22l-6 11h3l7-9zM45 19l10-3-4 7z" fill="#b4823f" />
    <path d="M11 9c-1-5 4-8 9-8 6 0 9 4 9 8 1 6-1 11-5 15-6 0-10-4-13-15z" fill="#8b5222" />
    <path d="M15 8c2-2 7-2 9 0l-1 7-3 4-3-4z" fill="#d9a868" />
    <path d="M16.500 10.500h2m3 0h2M18.500 15.500h3" stroke="#3a2110" strokeWidth="1.200" />
    <circle cx="13.500" cy="4.500" r="1.600" fill="#a86e35" /><circle cx="26" cy="4.500" r="1.600" fill="#a86e35" />
  </svg>
);

function Dock() {
  return (
    <Taskbar>
      <TaskItem $w={48}><svg width="16" height="18" viewBox="0 0 16 18" fill="#fff"><path d="M0 3l7-1v6.600H0zM7.800 1.900L16 .7v7.900H7.800zM0 9.400h7V16l-7-1zM7.800 9.400H16v7.900l-8.200-1.200z" /></svg></TaskItem>
      <SearchBox>
        <svg width="17" height="18" viewBox="0 0 17 18" fill="none" stroke="#222" strokeWidth="1.300"><circle cx="11" cy="6" r="5" /><path d="M7.500 9.800L.8 17" /></svg>
        <Fit w={128.500}>Type here to search</Fit>
        <Lion />
      </SearchBox>
      <TaskItem $w={48}><svg width="16" height="16" viewBox="0 0 16 16" fill="none" stroke="#fff" strokeWidth="1.200"><path d="M.5 0v3h10V0M.5 16v-3h10v3M.5 5h10v6H.5zM14.500 0v3m0 3v10" /><path d="M13.500 4h2v2.500h-2z" fill="#fff" stroke="none" /></svg></TaskItem>
      <TaskItem $w={54}>
        <svg width="24" height="24" viewBox="0 0 24 24">
          <defs>
            <linearGradient id="cp1" x1="0" y1="0" x2="0" y2="1"><stop offset="0" stopColor="#2a7be8" /><stop offset=".5" stopColor="#2fb6a0" /><stop offset="1" stopColor="#f0c52c" /></linearGradient>
            <linearGradient id="cp2" x1="0" y1="0" x2="0" y2="1"><stop offset="0" stopColor="#a66cf0" /><stop offset=".5" stopColor="#e8558e" /><stop offset="1" stopColor="#f58a4a" /></linearGradient>
          </defs>
          <path d="M8 2h7l-5 16H6c-4 0-6-2-5-5l2-7c1-3 2.500-4 5-4z" fill="url(#cp1)" />
          <path d="M16 22H9l5-16h4c4 0 6 2 5 5l-2 7c-1 3-2.500 4-5 4z" fill="url(#cp2)" />
          <path d="M9 2h6c1.500 0 2 1 2.500 4H14l-2 0z" fill="#1b4fc0" />
        </svg>
      </TaskItem>
      <TaskItem $w={44} $line={40}><FaWhatsapp size={27} color="#25d366" /></TaskItem>
      <TaskItem $w={3} />
      <TaskItem $w={48} $line={48} $active><Svg s={24} vb="0 0 48 48"><ChromeShapes /></Svg></TaskItem>
      <TaskItem $w={50} $line={40}>
        <svg width="24" height="24" viewBox="0 0 24 24"><path d="M6 1h9v12H6z" fill="#21a366" /><path d="M15 1h9v6h-9z" fill="#33c481" /><path d="M15 7h9v5h-9z" fill="#21a366" /><path d="M6 12h18v6H6z" fill="#107c41" /><path d="M6 17h18v6H6z" fill="#185c37" /><rect y="6" width="12" height="12" rx="1" fill="#107c41" /><path d="M3.500 8.500l5 7m0-7l-5 7" stroke="#fff" strokeWidth="1.700" /></svg>
      </TaskItem>
      <Tray>
        <Weather>
          <svg width="26" height="26" viewBox="0 0 26 26"><path d="M6 24a5.500 5.500 0 0 1-.5-10.800A7.500 7.500 0 0 1 19 12a6 6 0 0 1 1 12z" fill="#c4dbfa" /><path d="M6 24a5 5 0 0 1-4-3c5 1 6-2 9-1 4-3 9-3 14 0-1 3-2 4-5 4z" fill="#86aeea" /><circle cx="18.500" cy="7" r="6" fill="#cf2e22" /><text x="18.500" y="10" textAnchor="middle" fontSize="9" fill="#fff" fontFamily="Open Sans, sans-serif">1</text></svg>
          <Fit w={30}>32°C</Fit>
          <Fit w={87}>Mostly cloudy</Fit>
        </Weather>
        <Slot $w={24}><svg width="13" height="8"><path d="M1 7l5.500-5.500L12 7" fill="none" stroke="#fff" strokeWidth="1.300" /></svg></Slot>
        <Slot $w={24}><svg width="12" height="16" viewBox="0 0 12 16" fill="none" stroke="#fff" strokeWidth="1.200"><rect x=".8" y="4.500" width="7.500" height="7" rx="1.500" /><path d="M8.300 7l2.700-1.500v5L8.300 9M2.500 1.800c2-1.200 5-1.200 7 0M2.500 14.200c2 1.200 5 1.200 7 0" /></svg></Slot>
        <Slot $w={24}><svg width="16" height="11" viewBox="0 0 16 11"><path d="M3.500 6a4 4 0 0 1 8-2z" fill="#9aa2a9" /><path d="M4 11a3 3 0 0 1 0-6c3-3 6-1 7 0 3-.5 5 1 5 3s-1.500 3-3 3z" fill="#f4f5f6" /></svg></Slot>
        <Slot $w={24}><svg width="16" height="14" viewBox="0 0 16 14" fill="none" stroke="#fff" strokeWidth="1.100"><path d="M5.500 1.500h10v8h-10M3 13.300h9M9.500 9.500v3.800M.5.800h4v4h-4zM2.500 4.800v5h3" /></svg></Slot>
        <Slot $w={24}><svg width="16" height="14" viewBox="0 0 16 14" fill="none" stroke="#fff" strokeWidth="1.100"><path d="M.6 4.800h2.600L6.500 2v10L3.200 9.200H.6zM8.500 5c1 1.200 1 2.800 0 4M10.500 3.200c2 2.200 2 5.400 0 7.600" /><path d="M12.800 1.500c3 3.200 3 7.800 0 11" stroke="#75808a" /></svg></Slot>
        <TraySmall><Fit w={24}>ENG</Fit></TraySmall>
        <Clock><Fit w={49}>12:36 PM</Fit><Fit w={59}>10-08-2025</Fit></Clock>
        <Slot $w={50}><svg width="16" height="17" viewBox="0 0 16 17" fill="none" stroke="#fff" strokeWidth="1.200"><path d="M.6.600h14.800v12h-5L8 15l-2.400-2.400h-5z" /></svg></Slot>
        <ShowDesktop />
      </Tray>
    </Taskbar>
  );
}

export default function App() {
  return (
    <Desktop>
      <Global />
      <Wallpaper>
        <BigLetters>CI</BigLetters>
        <SmallLetter>A</SmallLetter>
        <Shortcuts>
          {shortcuts.map(([icon, lines], i) => (
            <Shortcut key={i}>
              {icon}
              <ShortcutLabel>{lines.map(([t, w]) => <Fit key={t} w={w}>{t}</Fit>)}</ShortcutLabel>
            </Shortcut>
          ))}
        </Shortcuts>
        <BrowserWindow>
          <BrowserChrome />
          <Workspace>
            <Header>
              <HeaderLeft>
                <Slot $w={32} $color="#c9ccd2"><House size={16} strokeWidth={1.600} /></Slot>
                <ProjectIcon><Sheet /></ProjectIcon>
                <ProjectName><Fit w={61.500}>DataVault</Fit></ProjectName>
                <Meter />
                <Usage><Fit w={55}>42% used</Fit></Usage>
              </HeaderLeft>
              <RunPill><Slot $w={26}><DotGrid /></Slot><RunLabel><Fit w={51}>Running</Fit></RunLabel></RunPill>
              <HeaderRight>
                <Slot $w={32}><Search size={16} strokeWidth={1.600} /></Slot>
                <HeaderButton $w={78}><UserRoundPlus size={16} strokeWidth={1.600} /><Fit w={37.500}>Invite</Fit></HeaderButton>
                <HeaderButton $w={86}><DeployGlyph s={16} /><Fit w={44}>Deploy</Fit></HeaderButton>
                <Slot $w={32}><Bell size={16} strokeWidth={1.500} /></Slot>
                <UserDot>KK</UserDot>
                <UserChevron><ChevronDown size={13} strokeWidth={1.700} /></UserChevron>
              </HeaderRight>
            </Header>
            <Body>
              <Rail>
                <RailButton $mt="0" $boxed><FolderChevrons /></RailButton>
                <RailButton $mt="170px" $dot><DotGrid /></RailButton>
                <RailRule />
                <RailButton $dot><Monitor size={16} strokeWidth={1.600} /></RailButton>
                <RailButton $color="#e6c35c"><svg width="14" height="12" viewBox="0 0 14 12" fill="none" stroke="currentColor" strokeWidth="1.100"><path d="M1 1.500l4 4.200-4 4.300M6.500 11h6" /></svg></RailButton>
                <RailButton $color="#8fb8ea"><Database size={16} strokeWidth={1.600} /></RailButton>
                <RailButton $color="#5ac46c"><DeployGlyph s={16} /></RailButton>
                <RailButton $color="#8fb84e"><UserRoundCheck size={17} strokeWidth={1.600} /></RailButton>
                <RailButton $mt="2px" $color="#d6d8dd"><LayoutGrid size={18} strokeWidth={1.500} /></RailButton>
                <RailButton $mt="auto"><Sparkle /></RailButton>
                <RailButton $mt="0"><HelpMark>?</HelpMark></RailButton>
              </Rail>
              <AgentPane />
              <Splitter />
              <PreviewPane />
            </Body>
          </Workspace>
        </BrowserWindow>
      </Wallpaper>
      <Dock />
    </Desktop>
  );
}
